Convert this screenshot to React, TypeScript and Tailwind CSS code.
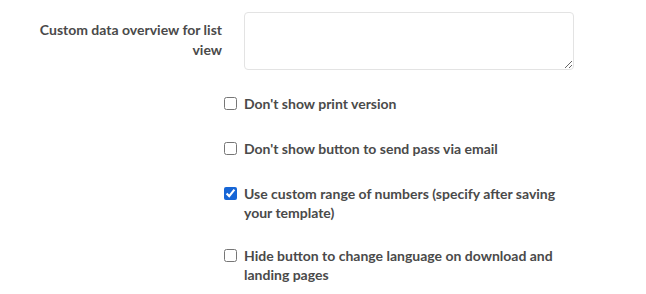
import React, { useState } from 'react';

const options = [
  { id: 'print', label: "Don't show print version", checked: false },
  { id: 'email', label: "Don't show button to send pass via email", checked: false },
  { id: 'range', label: 'Use custom range of numbers (specify after saving your template)', checked: true },
  { id: 'lang', label: 'Hide button to change language on download and landing pages', checked: false },
];

const App: React.FC = () => {
  const [values, setValues] = useState<Record<string, boolean>>(
    Object.fromEntries(options.map((o) => [o.id, o.checked]))
  );

  return (
    <div className="w-[646px] h-[294px] bg-white text-[#4a4a4a] font-['Lato',sans-serif] font-bold text-[14px] leading-[19px] pt-[12px]">
      <div className="flex">
        <label className="w-[190px] ml-[32px] pt-[8px] text-right leading-[20px]">Custom data overview for list view</label>
        <textarea className="ml-[22px] w-[330px] h-[58px] border border-[#e3e3e3] rounded-[4px] resize-y outline-none" />
      </div>

      <div className="flex flex-col gap-[24px] pl-[224px] mt-[23.5px]">
        {options.map((o) => (
          <label key={o.id} className="flex items-start min-h-[21px] w-[350px] cursor-pointer">
            <input
              type="checkbox"
              checked={values[o.id]}
              onChange={() => setValues({ ...values, [o.id]: !values[o.id] })}
              className="m-0 mt-[3px] w-[13px] h-[13px] shrink-0 accent-[#1766d6]"
            />
            <span className="ml-[7px]">{o.label}</span>
          </label>
        ))}
      </div>
    </div>
  );
};

export default App;
